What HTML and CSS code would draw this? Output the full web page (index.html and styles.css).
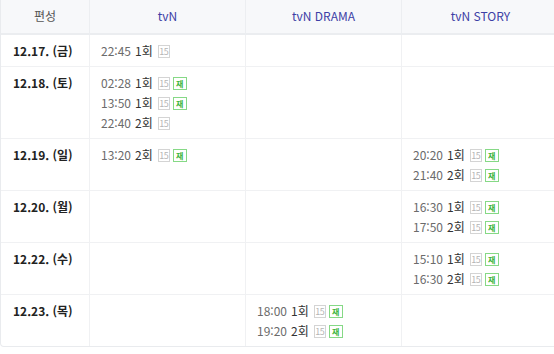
FILE: index.html
```html
<!DOCTYPE html>
<html lang="ko">
<head>
<meta charset="utf-8">
<link rel="stylesheet" href="styles.css">
</head>
<body>
<div class="sched">
  <div class="cell head first">편성</div>
  <div class="cell head ch">tvN</div>
  <div class="cell head ch">tvN DRAMA</div>
  <div class="cell head ch last">tvN STORY</div>

  <div class="cell date">12.17. (금)</div>
  <div class="cell"><div class="air"><span class="t">22:45</span> <span class="ep">1회</span><span class="b15">15</span></div></div>
  <div class="cell"></div>
  <div class="cell last"></div>

  <div class="cell date">12.18. (토)</div>
  <div class="cell">
    <div class="air"><span class="t">02:28</span> <span class="ep">1회</span><span class="b15">15</span><span class="re">재</span></div>
    <div class="air"><span class="t">13:50</span> <span class="ep">1회</span><span class="b15">15</span><span class="re">재</span></div>
    <div class="air"><span class="t">22:40</span> <span class="ep">2회</span><span class="b15">15</span></div>
  </div>
  <div class="cell"></div>
  <div class="cell last"></div>

  <div class="cell date">12.19. (일)</div>
  <div class="cell"><div class="air"><span class="t">13:20</span> <span class="ep">2회</span><span class="b15">15</span><span class="re">재</span></div></div>
  <div class="cell"></div>
  <div class="cell last">
    <div class="air"><span class="t">20:20</span> <span class="ep">1회</span><span class="b15">15</span><span class="re">재</span></div>
    <div class="air"><span class="t">21:40</span> <span class="ep">2회</span><span class="b15">15</span><span class="re">재</span></div>
  </div>

  <div class="cell date">12.20. (월)</div>
  <div class="cell"></div>
  <div class="cell"></div>
  <div class="cell last">
    <div class="air"><span class="t">16:30</span> <span class="ep">1회</span><span class="b15">15</span><span class="re">재</span></div>
    <div class="air"><span class="t">17:50</span> <span class="ep">2회</span><span class="b15">15</span><span class="re">재</span></div>
  </div>

  <div class="cell date">12.22. (수)</div>
  <div class="cell"></div>
  <div class="cell"></div>
  <div class="cell last">
    <div class="air"><span class="t">15:10</span> <span class="ep">1회</span><span class="b15">15</span><span class="re">재</span></div>
    <div class="air"><span class="t">16:30</span> <span class="ep">2회</span><span class="b15">15</span><span class="re">재</span></div>
  </div>

  <div class="cell date end">12.23. (목)</div>
  <div class="cell end"></div>
  <div class="cell end">
    <div class="air"><span class="t">18:00</span> <span class="ep">1회</span><span class="b15">15</span><span class="re">재</span></div>
    <div class="air"><span class="t">19:20</span> <span class="ep">2회</span><span class="b15">15</span><span class="re">재</span></div>
  </div>
  <div class="cell last end"></div>
</div>
</body>
</html>
```
FILE: styles.css
```css
html, body {
  margin: 0;
  padding: 0;
  background: #fff;
  overflow: hidden;
}
body {
  font-family: "Noto Sans CJK KR", "Noto Sans", sans-serif;
  font-size: 12px;
  color: #333;
}
.sched {
  width: 560px;
  display: grid;
  grid-template-columns: 89px 156px 156px 157px;
  border: 1px solid #e9ebee;
  border-top: none;
  border-radius: 0 0 4px 4px;
  box-sizing: border-box;
}
.cell {
  border-right: 1px solid #f0f1f3;
  border-bottom: 1px solid #f0f1f3;
  padding: 6px 11px 5px;
  line-height: 20px;
  min-height: 20px;
}
.cell.last { border-right: none; }
.cell.end { border-bottom: none; }
.head {
  padding: 0 0 1px;
  line-height: 32px;
  text-align: center;
  background: #f7f8fa;
  border-bottom: 2px solid #ebedf0;
  border-right: 1px solid #eceef1;
  box-sizing: border-box;
  height: 35px;
  font-size: 12px;
}
.head.last { border-right: none; }
.head.first { color: #555; }
.head.ch { color: #3d3fa6; }
.date {
  font-weight: 700;
  color: #222;
  padding-left: 12px;
  padding-right: 0;
}
.air {
  white-space: nowrap;
  display: flex;
  align-items: center;
}
.t { color: #6b6b6b; }
.ep { color: #333; margin-left: 4px; }
.b15, .re {
  display: inline-block;
  box-sizing: border-box;
  height: 13px;
  line-height: 11px;
  font-size: 9px;
  text-align: center;
  border: 1px solid;
  margin-left: 3px;
}
.b15 {
  width: 12px;
  margin-left: 5px;
  color: #b5b5b5;
  border-color: #d4d4d4;
  letter-spacing: -0.5px;
}
.re {
  width: 14px;
  color: #3cb43c;
  border-color: #86d986;
  font-weight: 700;
  font-size: 8px;
}
```
